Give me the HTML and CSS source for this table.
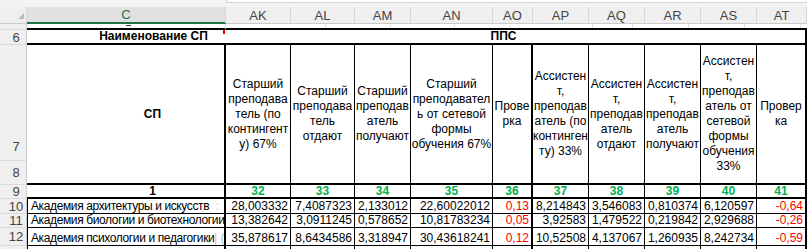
FILE: index.html
```html
<!DOCTYPE html>
<html lang="ru">
<head>
<meta charset="utf-8">
<title>Лист</title>
<link rel="stylesheet" href="styles.css">
</head>
<body>
<div class="topbar"><div class="fbar"></div></div>
<div class="sheet">
  <div class="ch corner"><span class="tri"></span></div>
  <div class="ch sel">C</div>
  <div class="ch">AK</div>
  <div class="ch">AL</div>
  <div class="ch">AM</div>
  <div class="ch">AN</div>
  <div class="ch">AO</div>
  <div class="ch">AP</div>
  <div class="ch">AQ</div>
  <div class="ch">AR</div>
  <div class="ch">AS</div>
  <div class="ch">AT</div>

  <div class="rh"></div>
  <div class="c5"><span class="mark"></span></div>
  <div class="c5"></div><div class="c5"></div><div class="c5"></div><div class="c5"></div><div class="c5"></div>
  <div class="c5"></div><div class="c5"></div><div class="c5"></div><div class="c5"></div><div class="c5"></div>

  <div class="rh">6</div>
  <div class="c6 cname">Наименование СП<span class="note"></span></div>
  <div class="c6 pps">ППС</div>

  <div class="rh r7">7</div>
  <div class="hd cname tk"><b>СП</b></div>
  <div class="hd">Старший<br>преподава<br>тель (по<br>контингент<br>у) 67%</div>
  <div class="hd">Старший<br>преподава<br>тель<br>отдают</div>
  <div class="hd">Старший<br>преподав<br>атель<br>получают</div>
  <div class="hd">Старший<br>преподавател<br>ь от сетевой<br>формы<br>обучения 67%</div>
  <div class="hd tk">Прове<br>рка</div>
  <div class="hd">Ассистен<br>т,<br>преподав<br>атель (по<br>континген<br>ту) 33%</div>
  <div class="hd">Ассистен<br>т,<br>преподав<br>атель<br>отдают</div>
  <div class="hd">Ассистен<br>т,<br>преподав<br>атель<br>получают</div>
  <div class="hd">Ассистен<br>т,<br>преподав<br>атель от<br>сетевой<br>формы<br>обучения<br>33%</div>
  <div class="hd tk">Провер<br>ка</div>
  <div class="rh r8">8</div>

  <div class="rh">9</div>
  <div class="n9 cname tk one">1</div>
  <div class="n9">32</div>
  <div class="n9">33</div>
  <div class="n9">34</div>
  <div class="n9">35</div>
  <div class="n9 tk">36</div>
  <div class="n9">37</div>
  <div class="n9">38</div>
  <div class="n9">39</div>
  <div class="n9">40</div>
  <div class="n9 tk">41</div>

  <div class="rh">10</div>
  <div class="d nm tk"><span class="nmt">Академия архитектуры и искусств</span><span class="spill"><span class="sb">:</span></span></div>
  <div class="d">28,003332</div>
  <div class="d">7,4087323</div>
  <div class="d">2,133012</div>
  <div class="d">22,60022012</div>
  <div class="d tk red">0,13</div>
  <div class="d">8,214843</div>
  <div class="d">3,546083</div>
  <div class="d">0,810374</div>
  <div class="d">6,120597</div>
  <div class="d tk red">-0,64</div>

  <div class="rh">11</div>
  <div class="d nm tk"><span class="nmt">Академия биологии и биотехнологии</span></div>
  <div class="d">13,382642</div>
  <div class="d">3,0911245</div>
  <div class="d">0,578652</div>
  <div class="d">10,81783234</div>
  <div class="d tk red">0,05</div>
  <div class="d">3,92583</div>
  <div class="d">1,479522</div>
  <div class="d">0,219842</div>
  <div class="d">2,929688</div>
  <div class="d tk red">-0,26</div>

  <div class="rh">12</div>
  <div class="d nm tk"><span class="nmt">Академия психологии и педагогики</span><span class="spill"><span class="so">|</span><span class="sb">(</span></span></div>
  <div class="d">35,878617</div>
  <div class="d">8,6434586</div>
  <div class="d">3,318947</div>
  <div class="d">30,43618241</div>
  <div class="d tk red">0,12</div>
  <div class="d">10,52508</div>
  <div class="d">4,137067</div>
  <div class="d">1,260935</div>
  <div class="d">8,242734</div>
  <div class="d tk red">-0,59</div>

  <div class="rh"></div>
  <div class="d nm tk"></div>
  <div class="d"></div><div class="d"></div><div class="d"></div><div class="d"></div>
  <div class="d tk"></div>
  <div class="d"></div><div class="d"></div><div class="d"></div><div class="d"></div>
  <div class="d tk"></div>
</div>
</body>
</html>
```

FILE: styles.css
```css
html, body {
  margin: 0;
  padding: 0;
  background: #fff;
  overflow: hidden;
}

body {
  width: 807px;
  height: 249px;
  font-family: "Liberation Sans", Arial, sans-serif;
  font-size: 12px;
  color: #000;
}

.topbar {
  height: 7px;
  background: #f3f3f3;
  display: flex;
  justify-content: flex-end;
}

.fbar {
  width: 580px;
  height: 2px;
  background: #fff;
  border-left: 1px solid #d4d4d4;
  border-bottom: 1px solid #d4d4d4;
}

.sheet {
  display: grid;
  grid-template-columns: 27px 199px 65px 64px 56px 82px 40px 56px 56px 56px 56px 50px;
  grid-template-rows: 17px 6px 15px 116px 24px 14px 15px 14px 18px 20px;
  height: 242px;
  overflow: hidden;
}

.sheet > div {
  box-sizing: border-box;
  min-width: 0;
  overflow: hidden;
}

/* column headers */
.ch {
  background: #efefef;
  color: #444;
  font-size: 13px;
  border-right: 1px solid #d6d6d6;
  border-bottom: 1px solid #cbcbcb;
  display: flex;
  align-items: center;
  justify-content: center;
  line-height: 15px;
}

.ch.sel {
  background: #e1e1e1;
  color: #217346;
  border-bottom: 2px solid #217346;
}

.corner {
  justify-content: flex-end;
  align-items: flex-end;
  padding: 0 2px 4px 0;
}

.tri {
  width: 0;
  height: 0;
  border-left: 6px solid transparent;
  border-bottom: 6px solid #bdbdbd;
}

/* row headers */
.rh {
  background: #efefef;
  color: #444;
  font-size: 13px;
  border-right: 1px solid #d0d0d0;
  border-bottom: 1px solid #dadada;
  display: flex;
  align-items: center;
  justify-content: center;
  padding-left: 6px;
  line-height: 15px;
}

.rh.r7 {
  align-items: flex-end;
  padding-bottom: 6px;
}

/* row 5 (partly visible) */
.c5 {
  border-right: 1px solid #e2e2e2;
  border-bottom: 2px solid #000;
  display: flex;
  justify-content: flex-start;
  padding-left: 99px;
}

.mark {
  display: block;
  width: 5px;
  height: 1px;
  margin-top: 1px;
  background: #333;
}

/* row 6 */
.c6 {
  border-bottom: 2px solid #000;
  font-weight: bold;
  display: flex;
  align-items: center;
  justify-content: center;
  line-height: 15px;
  white-space: nowrap;
}

.c6.cname {
  position: relative;
  padding-left: 54px;
}

.note {
  position: absolute;
  top: 0;
  right: 1px;
  width: 2px;
  height: 4px;
  background: #e00000;
}

.pps {
  grid-column: span 10;
  border-right: 2px solid #000;
  padding-right: 24px;
}

/* header rows 7-8 */
.hd {
  grid-row: span 2;
  border-right: 1px solid #000;
  border-bottom: 2px solid #000;
  display: flex;
  align-items: center;
  justify-content: center;
  text-align: center;
  line-height: 15px;
  white-space: nowrap;
}

.hd.cname {
  padding-left: 54px;
}

/* row 9 */
.n9 {
  border-right: 1px solid #000;
  border-bottom: 2px solid #000;
  display: flex;
  align-items: center;
  justify-content: center;
  color: #00b050;
  font-weight: bold;
  line-height: 13px;
}

.n9.one {
  color: #000;
  padding-left: 54px;
}

/* data rows */
.d {
  border-right: 1px solid #000;
  border-bottom: 1px solid #000;
  display: flex;
  align-items: flex-end;
  justify-content: flex-end;
  padding: 0 2px 0 2px;
  line-height: 14px;
  white-space: nowrap;
}

.d.nm {
  border-left: 1px solid #000;
  justify-content: flex-start;
  padding-left: 3px;
}

.nmt {
  letter-spacing: -0.38px;
}

.spill {
  margin-left: auto;
  padding-right: 3px;
  display: flex;
  gap: 3px;
}

.sb { color: #9cc3e5; }
.so { color: #f4b183; }

.red { color: #ff0000; }

.sheet > .tk {
  border-right-width: 2px;
}
```
